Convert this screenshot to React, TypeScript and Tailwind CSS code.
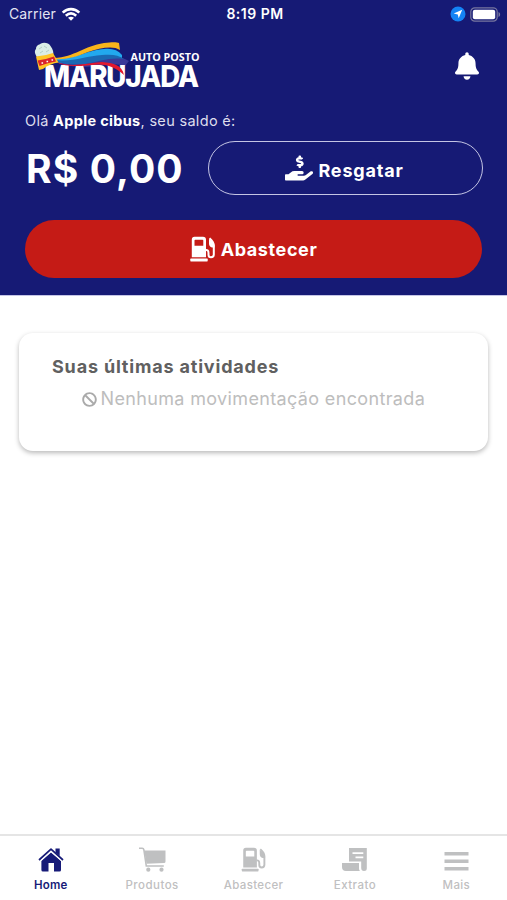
import type { ReactNode } from "react";
import { FaBan, FaBell, FaHandHoldingUsd } from "react-icons/fa";

interface TabProps {
  icon: ReactNode;
  label: string;
  tracking: string;
  active?: boolean;
}

function Logo() {
  return (
    <svg
      viewBox="0 0 176 60"
      className="h-[60px] w-[176px] overflow-visible"
      role="img"
      aria-label="Auto Posto Marujada"
    >
      {/* ribbons behind the name */}
      <path d="M24 19C44 27 56 17 74 16C84 15 91 16 97 20L93 25C78 21 62 27 48 26C38 25 30 24 24 21Z" fill="#3a3a98" />
      <path
        d="M22 18C44 18 56 9 72 8C80 7 86 9 90 14L90 17C79 13 66 17 54 21C43 24 32 23 22 20Z"
        fill="#22a9ee"
      />
      <path d="M22 19C42 21 54 15 70 14C80 13 87 14 92 18C78 16 66 21 53 23C42 24 31 23 22 20Z" fill="#1b69b3" />
      <path d="M22 17C43 16 52 5 72 2C80 1 85 1 87 2L88 9C81 4 68 7 56 11C44 16 33 19 22 18Z" fill="#f9b51b" />
      <text
        x="12"
        y="45.5"
        textLength="154"
        lengthAdjust="spacingAndGlyphs"
        letterSpacing="-1.2"
        fill="#ffffff"
        fontSize="29.5"
        fontWeight="800"
        fontFamily="Inter, 'Open Sans', sans-serif"
      >
        MARUJADA
      </text>
      <text
        x="98.5"
        y="19.5"
        textLength="69"
        lengthAdjust="spacingAndGlyphs"
        fill="#ffffff"
        fontSize="11"
        fontWeight="700"
        fontFamily="'Open Sans', sans-serif"
      >
        AUTO POSTO
      </text>
      {/* ribbon tail over the letters */}
      <path d="M24 21C40 27 55 22 70 21C82 22 90 24 92 34C85 28 78 23.5 66 23.5C50 25 35 27 24 21Z" fill="#e3182d" />
      {/* feathered hat */}
      <path d="M5 16C3 13 2 10 4 8C4 4 7 4 9 2.5C12 1 17 2 18.5 5C21 8 22 12 21 14Z" fill="#dbeee7" />
      <path d="M7 8L10 6M12 5L15 7M8 12L11 10M14 11L17 9" stroke="#a9c6be" strokeWidth="0.8" />
      <path d="M4 15.5Q13 15 21 12L26.5 21.5Q18 22.5 11 28L7 29Z" fill="#ffc526" />
      <path d="M5.5 19.5Q14 18.5 22 15.5L24 20.5Q16 21.5 7.5 25Z" fill="#d9252b" />
      <path d="M9.5 22h1.6M14.5 20.5h1.6M19.5 19h1.6" stroke="#ffffff" strokeWidth="1.5" />
    </svg>
  );
}

function WifiIcon() {
  return (
    <svg viewBox="0 0 20 15" className="h-[15px] w-5" fill="none" stroke="#ffffff" strokeWidth="2.6">
      <path d="M1.7 5.6C6.5.9 13.5.9 18.3 5.6" />
      <path d="M4.8 8.7C8 5.9 12 5.9 15.2 8.7" />
      <path d="M7 10.7C9 9.3 11 9.3 13 10.7L10 13.7Z" fill="#ffffff" stroke="none" />
    </svg>
  );
}

function BatteryIcon() {
  return (
    <svg viewBox="0 0 31 15" className="h-[15px] w-[31px]">
      <rect x="0.8" y="0.8" width="26.4" height="13.4" rx="4" fill="none" stroke="#77769f" strokeWidth="1.2" />
      <rect x="2.8" y="2.8" width="22.4" height="9.4" rx="2" fill="#ffffff" />
      <path d="M28.5 5C30.7 6 30.7 9 28.5 10Z" fill="#77769f" />
    </svg>
  );
}

function PumpIcon({ className }: { className: string }) {
  return (
    <svg viewBox="0 0 26 26" className={className} fill="currentColor">
      <path
        fillRule="evenodd"
        d="M4.5 0.7H13Q16 0.7 16 3.7V21.3H1.8V3.7Q1.8 0.7 4.5 0.7ZM5.3 3.8Q4.5 3.8 4.5 4.6V9.8H13.3V4.6Q13.3 3.8 12.5 3.8Z"
      />
      <rect x="0.3" y="22.6" width="17.4" height="2.8" rx="0.6" />
      <path
        d="M15.5 14Q18.5 13.5 18.5 17V18.8Q18.5 21.3 21 21.3Q23.8 21.3 23.8 18.5V9.5Q23.8 6 19.5 2.3"
        fill="none"
        stroke="currentColor"
        strokeWidth="2"
      />
      <path d="M19 3V7.5Q19 10.5 22 11.5H24.5V9Q24 6 19 3Z" />
    </svg>
  );
}

function HomeIcon() {
  return (
    <svg viewBox="0 0 26 25" className="h-[25px] w-[26px]" fill="currentColor">
      <path d="M17.5 1.5H21.7V9L17.5 5.5Z" />
      <path d="M13 5.5L23 14V23Q23 24.5 21.5 24.5H16V16H10.5V24.5H5Q3.4 24.5 3.4 23V14Z" />
      <path
        d="M1 13L13 2.2L25 13"
        fill="none"
        stroke="currentColor"
        strokeWidth="1.7"
        strokeLinejoin="round"
      />
      <path d="M3 13.5L13 4.5L23 13.5" fill="none" stroke="#ffffff" strokeWidth="0.9" />
    </svg>
  );
}

function CartIcon() {
  return (
    <svg viewBox="0 0 27 25" className="h-[25px] w-[27px]" fill="currentColor">
      <path d="M5.2 3.5H26.5V14.5Q26.5 16 25 16L7.5 16.7Z" />
      <path
        d="M0 1.3H3.2Q4.6 1.3 4.9 3L7.3 19H24.8"
        fill="none"
        stroke="currentColor"
        strokeWidth="1.6"
      />
      <circle cx="9.3" cy="22.7" r="2.1" />
      <circle cx="22.5" cy="22.7" r="2.1" />
    </svg>
  );
}

function StatementIcon() {
  return (
    <svg viewBox="0 0 27 25" className="h-[25px] w-[27px]" fill="currentColor">
      <path
        fillRule="evenodd"
        d="M8 1H25.8V21.5Q25.8 24 23 24Q20.2 24 20.2 21V14.5H8ZM11.5 5.3V7H22.3V5.3ZM14.5 9.6V11.3H22.3V9.6Z"
      />
      <path d="M1 16H18V21.5Q18 23 19 24H5Q1 24 1 20Z" />
    </svg>
  );
}

function MenuIcon() {
  return (
    <svg viewBox="0 0 25 25" className="h-[25px] w-[25px]" fill="currentColor">
      <path d="M0.5 5H24.5V8.6H0.5ZM0.5 12.5H24.5V16.1H0.5ZM0.5 20H24.5V23.6H0.5Z" />
    </svg>
  );
}

function Tab({ icon, label, tracking, active }: TabProps) {
  return (
    <button
      className={`flex flex-1 flex-col items-center pt-[11px] ${
        active ? "text-[#171b78]" : "text-[#bfc0c1]"
      }`}
    >
      <span className="flex h-[25px] items-center">{icon}</span>
      <span
        className={`mt-[5px] text-[11.5px] leading-4 whitespace-nowrap ${tracking} ${
          active ? "font-semibold" : "font-medium"
        }`}
      >
        {label}
      </span>
    </button>
  );
}

export default function App() {
  return (
    <div className="flex h-[900px] w-[507px] flex-col overflow-hidden bg-white font-[Inter,'Open_Sans',sans-serif]">
      <header className="flex h-[295px] shrink-0 flex-col bg-[#161a75] text-white">
        <div className="grid h-7 grid-cols-3 items-center pr-[6px] pl-[9px]">
          <div className="flex items-center gap-[5px]">
            <span className="pb-px text-[14px] tracking-[0.01em] text-[#e4e4f2]">Carrier</span>
            <WifiIcon />
          </div>
          <span className="pb-px text-center text-[14px] font-semibold tracking-[0.035em] whitespace-nowrap">
            8:19 PM
          </span>
          <div className="flex items-center justify-end gap-1">
            <svg viewBox="0 0 16 16" className="h-4 w-4">
              <circle cx="8" cy="8" r="7.5" fill="#1483f5" />
              <path d="M12.2 3.7L8.7 12.2L7.8 8.4L3.7 7.5Z" fill="#ffffff" />
            </svg>
            <BatteryIcon />
          </div>
        </div>

        <div className="flex h-[79px] items-start justify-between pt-[13px] pr-7 pl-8">
          <Logo />
          <FaBell className="mt-[11px] h-7 w-6" />
        </div>

        <div className="flex flex-col px-[25px]">
          <p className="h-7 text-[14.5px] leading-7 tracking-[0.32px] whitespace-nowrap text-[#dedeed]">
            Olá <b className="font-bold text-white">Apple cibus</b>, seu saldo é:
          </p>
          <div className="-mr-px mt-1.5 flex items-center justify-between">
            <strong className="pt-0.5 pl-px text-[39px] leading-[52px] font-bold tracking-[1.1px] whitespace-nowrap">
              R$ 0,00
            </strong>
            <button className="flex h-[54px] w-[275px] items-center justify-center gap-[5px] rounded-full border-[1.5px] border-[#c4c5e4] pr-0.5 text-[18px] font-bold">
              <FaHandHoldingUsd className="h-7 w-7" />
              <span className="pt-1 tracking-[0.8px]">Resgatar</span>
            </button>
          </div>
          <button className="mt-[25px] flex h-[58px] items-center justify-center gap-[5px] rounded-full bg-[#c51b16] text-[18px] font-bold">
            <PumpIcon className="h-[26px] w-[26px]" />
            <span className="tracking-[0.6px]">Abastecer</span>
          </button>
        </div>
      </header>

      <main className="flex-1 border-t border-[#c5c5e6] px-[19px] pt-[37px]">
        <section className="h-[118px] rounded-[14px] bg-white px-[33px] pt-5 shadow-[0_2px_5px_rgba(0,0,0,0.28)]">
          <h2 className="text-[18px] leading-7 font-bold tracking-[0.82px] whitespace-nowrap text-[#606060]">
            Suas últimas atividades
          </h2>
          <div className="mt-1 flex items-center gap-1 pl-[29.5px] whitespace-nowrap text-[#bdbdbd]">
            <FaBan className="h-[15px] w-[15px] text-[#aaaaaa]" />
            <span className="text-[18px] leading-7 font-normal tracking-[0.35px]">
              Nenhuma movimentação encontrada
            </span>
          </div>
        </section>
      </main>

      <nav className="flex h-[66px] shrink-0 border-t-2 border-[#e5e5e5]">
        <Tab icon={<HomeIcon />} label="Home" tracking="tracking-[0.02em]" active />
        <Tab icon={<CartIcon />} label="Produtos" tracking="tracking-[0.04em]" />
        <Tab icon={<PumpIcon className="h-[25px] w-[26px]" />} label="Abastecer" tracking="tracking-[0.03em]" />
        <Tab icon={<StatementIcon />} label="Extrato" tracking="tracking-[0.04em]" />
        <Tab icon={<MenuIcon />} label="Mais" tracking="tracking-[0.03em]" />
      </nav>
    </div>
  );
}
